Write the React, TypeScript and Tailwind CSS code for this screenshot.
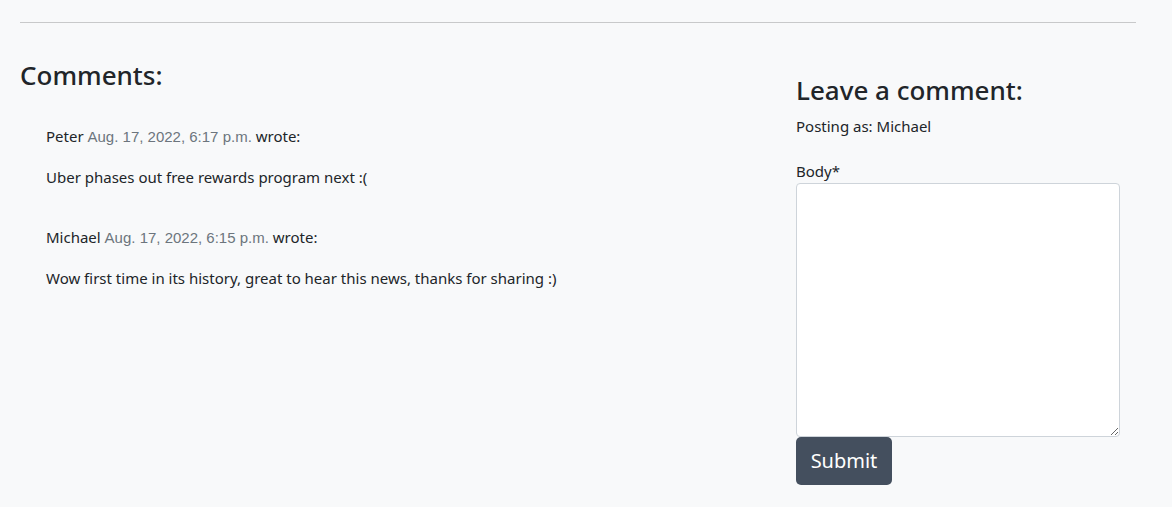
import React from "react";

const comments = [
  { name: "Peter", date: "Aug. 17, 2022, 6:17 p.m.", body: "Uber phases out free rewards program next :(" },
  { name: "Michael", date: "Aug. 17, 2022, 6:15 p.m.", body: "Wow first time in its history, great to hear this news, thanks for sharing :)" },
];

export default function App() {
  return (
    <div className="min-h-[507px] bg-[#f8f9fa] text-[#212529] font-['Noto_Sans',sans-serif]">
      <div className="px-5 pt-[22px]">
        <div className="h-px bg-[#c8c9ca] w-[1116px]" />
        <div className="flex">
          <div className="w-[776px] pt-[36px]">
            <h3 className="text-[26px] leading-[32px] font-medium">Comments:</h3>
            <div className="pl-[26px] pt-[34px]">
              {comments.map((c, i) => (
                <div key={i} className="mb-[38px] text-[15px] leading-[22px]">
                  <p className="mb-[18px]">
                    {c.name}{" "}
                    <span className="text-[#6c757d] font-['Liberation_Sans',sans-serif]">{c.date}</span>{" "}
                    wrote:
                  </p>
                  <p>{c.body}</p>
                </div>
              ))}
            </div>
          </div>
          <div className="w-[324px] pt-[51px]">
            <h3 className="text-[26px] leading-[32px] font-medium">Leave a comment:</h3>
            <p className="text-[15px] leading-[22px] mt-[9px]">Posting as: Michael</p>
            <label className="block text-[15px] leading-[22px] mt-[23px] mb-px">Body*</label>
            <textarea className="block w-[324px] h-[254px] bg-white border border-[#ced4da] rounded-[4px] resize-y" />
            <button className="mt-0 h-[48px] w-[96px] rounded-[5px] bg-[#444f5e] text-white text-[20px]">Submit</button>
          </div>
        </div>
      </div>
    </div>
  );
}
